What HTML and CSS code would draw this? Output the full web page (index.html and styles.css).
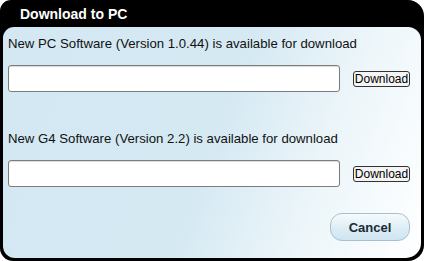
FILE: index.html
```html
<!DOCTYPE html>
<html>
<head>
    <meta charset="UTF-8">
    <title>Download to PC</title>
    <link rel="stylesheet" href="styles.css">
</head>
<body>
<div class="window">
    <div class="title">Download to PC</div>

    <div class="panel">
        <p class="label">New PC Software (Version 1.0.44) is available for download</p>
        <div class="row">
            <input type="text" class="path" id="pc-path">
            <button class="small-btn" type="button">Download</button>
        </div>

        <p class="label second">New G4 Software (Version 2.2) is available for download</p>
        <div class="row">
            <input type="text" class="path" id="g4-path">
            <button class="small-btn" type="button">Download</button>
        </div>

        <div class="actions">
            <button class="cancel-btn" type="button">Cancel</button>
        </div>
    </div>
</div>
</body>
</html>
```

FILE: styles.css
```css
body {
    margin: 0;
    background-color: #ffffff;
    font-family: "Liberation Sans", Arial, sans-serif;
}

.window {
    width: 424px;
    height: 261px;
    box-sizing: border-box;
    background-color: #000000;
    border-radius: 11px 16px 16px 13px;
    padding: 0 3px 3px 3px;
    display: flex;
    flex-direction: column;
}

.title {
    height: 27px;
    line-height: 28px;
    padding-left: 17px;
    color: #ffffff;
    font-size: 14px;
    font-weight: bold;
}

.panel {
    flex: 1;
    border-radius: 11px 13px 15px 12px;
    background: linear-gradient(110deg, #d3e8f3 0%, #d5e9f3 50%, #edf6fa 75%, #ffffff 100%);
    padding: 9px 11px 0 5px;
}

.label {
    margin: 0;
    font-size: 13.2px;
    line-height: 16px;
    color: #111111;
}

.label.second {
    margin-top: 39px;
}

.row {
    display: flex;
    align-items: center;
    gap: 13px;
    margin-top: 13px;
}

.path {
    width: 332px;
    height: 27px;
    box-sizing: border-box;
    border: 1px solid #7c7c7c;
    border-radius: 3px;
    background-color: #ffffff;
    box-shadow: inset 0 1px 1px rgba(0, 0, 0, 0.15);
    margin: 0;
}

.small-btn {
    width: 57px;
    height: 16px;
    padding: 0;
    border: 1px solid #333333;
    border-radius: 3px;
    background-color: #f4f4f4;
    font-family: "Liberation Sans", Arial, sans-serif;
    font-size: 12px;
    line-height: 14px;
    color: #000000;
}

.actions {
    display: flex;
    justify-content: flex-end;
    margin-top: 26px;
}

.cancel-btn {
    width: 80px;
    height: 28px;
    border: 1px solid #a9bfcc;
    border-radius: 12px;
    background: linear-gradient(#f6fbfd, #dcedf6 55%, #cfe5f1);
    font-family: "Liberation Sans", Arial, sans-serif;
    font-size: 13px;
    font-weight: bold;
    color: #1a2a33;
}
```
